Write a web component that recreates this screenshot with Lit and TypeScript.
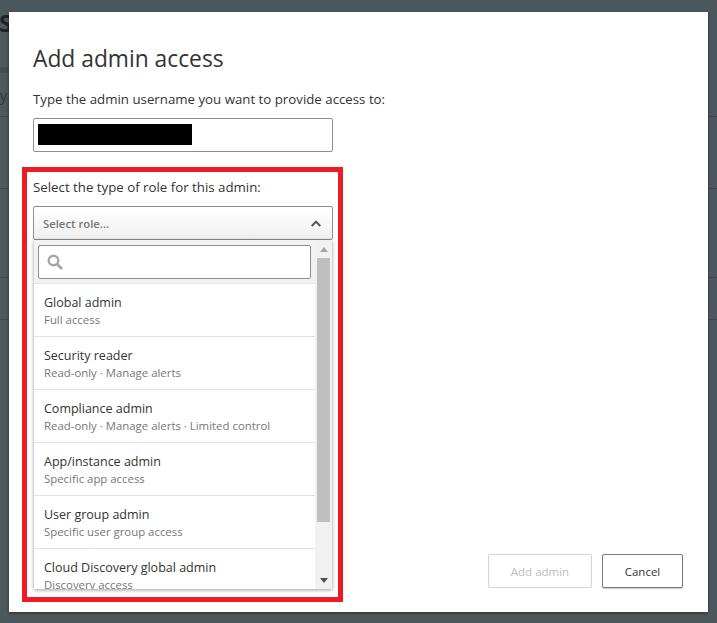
import { LitElement, html, css } from "lit";
import { customElement } from "lit/decorators.js";

const roles = [
  ["Global admin", "Full access"],
  ["Security reader", "Read-only · Manage alerts"],
  ["Compliance admin", "Read-only · Manage alerts · Limited control"],
  ["App/instance admin", "Specific app access"],
  ["User group admin", "Specific user group access"],
  ["Cloud Discovery global admin", "Discovery access"],
];

@customElement("app-root")
export class AppRoot extends LitElement {
  static styles = css`
    :host {
      display: block;
      position: relative;
      height: 623px;
      overflow: hidden;
      background: #4c585b;
      font-family: "Open Sans", "Noto Sans", sans-serif;
      color: #333;
    }
    * { box-sizing: border-box; }
    .bg-s { position: absolute; left: -1px; top: 8px; font: 700 24px/30px "Open Sans", sans-serif; color: #1d2527; }
    .bg-y { position: absolute; left: 0; top: 86px; font: 14px/20px "Open Sans", sans-serif; color: #2f383a; }
    .bg-band { position: absolute; left: 0; top: 67px; width: 9px; height: 6px; background: #424d50; }
    .bg-line { position: absolute; left: 0; width: 100%; height: 1px; background: #3f4a4c; }
    .l1 { top: 116px; } .l2 { top: 188px; } .l3 { top: 277px; } .l4 { top: 319px; }
    .modal {
      position: absolute;
      left: 9px; top: 12px;
      width: 699px; height: 600px;
      background: #fff;
      box-shadow: 0 1px 3px rgba(0,0,0,.45);
      display: flex;
      padding: 31px 25px 24px 13px;
    }
    .col { width: 321px; flex: none; display: flex; flex-direction: column; }
    .col > *, .red > * { flex: none; }
    h1 { margin: 0 0 0 11px; font: 400 22.8px/32px "Open Sans", sans-serif; color: #333; }
    .label { font-size: 13.27px; line-height: 18px; color: #333; white-space: nowrap; }
    .l-top { margin: 15px 0 0 11px; }
    .input {
      margin: 10px 0 0 11px;
      width: 300px; height: 34px;
      border: 1px solid #8e8e8e; border-radius: 2px;
      padding: 5px 4px; background: #fff;
    }
    .redact { width: 154px; height: 21px; background: #000; }
    .red {
      margin-top: 15px;
      height: 435px;
      border: 5px solid #ed1c24;
      padding: 6px 5px 0 6px;
      display: flex; flex-direction: column;
    }
    .select {
      margin-top: 10px;
      height: 34px;
      border: 1px solid #8e8e8e; border-radius: 2px;
      background: linear-gradient(#fff, #f0f0f0);
      display: flex; align-items: center; justify-content: space-between;
      padding: 0 11px 0 9px;
      font-size: 11.3px; font-weight: 600; color: #777;
    }
    .panel {
      margin: 0 1px;
      height: 349px;
      display: flex;
      overflow: hidden;
      background: #fff;
      box-shadow: 0 1px 4px rgba(0,0,0,.4);
    }
    .list { flex: 1; min-width: 0; display: flex; flex-direction: column; }
    .search-wrap { flex: none; height: 44px; padding: 5px 4px 4px 4px; background: #f2f2f2; border-bottom: 1px solid #e6e6e6; }
    .search {
      height: 34px; width: 273px;
      border: 1px solid #8e8e8e; border-radius: 2px; background: #fff;
      display: flex; align-items: center; padding-left: 8px;
    }
    .item { flex: none; height: 53px; padding: 10px 10px 0; border-bottom: 1px solid #e2e2e2; }
    .t { font-size: 12.5px; line-height: 17px; color: #333; white-space: nowrap; }
    .s { font-size: 11.4px; line-height: 18px; color: #777; white-space: nowrap; }
    .track { flex: none; width: 17px; background: #f1f1f1; display: flex; flex-direction: column; align-items: center; }
    .arrow { flex: none; height: 18px; display: flex; align-items: center; justify-content: center; }
    .thumb { flex: none; width: 13px; height: 264px; background: #bfbfbf; }
    .grow { flex: 1; }
    .actions { flex: 1; align-self: flex-end; display: flex; justify-content: flex-end; gap: 10px; }
    button {
      height: 34px; background: #fff; border-radius: 2px;
      font: 400 11.5px "Open Sans", sans-serif;
    }
    .add { width: 104px; border: 1px solid #d4d4d4; color: #bbb; }
    .cancel { width: 81px; border: 1px solid #7a7a7a; color: #333; box-shadow: 0 1px 1px rgba(0,0,0,.2); }
  `;

  render() {
    return html`
      <div class="bg-s">S</div>
      <div class="bg-y">y</div>
      <div class="bg-band"></div>
      <div class="bg-line l1"></div>
      <div class="bg-line l2"></div>
      <div class="bg-line l3"></div>
      <div class="bg-line l4"></div>
      <div class="modal">
        <div class="col">
          <h1>Add admin access</h1>
          <div class="label l-top">Type the admin username you want to provide access to:</div>
          <div class="input"><div class="redact"></div></div>
          <div class="red">
            <div class="label">Select the type of role for this admin:</div>
            <div class="select">
              <span>Select role...</span>
              <svg width="10" height="7" viewBox="0 0 10 7"><path d="M.8 6L5 1.6 9.2 6" fill="none" stroke="#555" stroke-width="2"/></svg>
            </div>
            <div class="panel">
              <div class="list">
                <div class="search-wrap">
                  <div class="search">
                    <svg width="16" height="16" viewBox="0 0 16 16"><circle cx="6.5" cy="6.5" r="4.8" fill="none" stroke="#a6a6a6" stroke-width="2.4"/><path d="M10.2 10.2L15 15" stroke="#a6a6a6" stroke-width="2.8"/></svg>
                  </div>
                </div>
                ${roles.map(([t, s]) => html`<div class="item"><div class="t">${t}</div><div class="s">${s}</div></div>`)}
              </div>
              <div class="track">
                <div class="arrow"><svg width="8" height="5" viewBox="0 0 8 5"><path d="M4 0l4 5H0z" fill="#a3a3a3"/></svg></div>
                <div class="thumb"></div>
                <div class="grow"></div>
                <div class="arrow"><svg width="8" height="5" viewBox="0 0 8 5"><path d="M0 0h8L4 5z" fill="#505050"/></svg></div>
              </div>
            </div>
          </div>
        </div>
        <div class="actions">
          <button class="add" disabled>Add admin</button>
          <button class="cancel">Cancel</button>
        </div>
      </div>
    `;
  }
}
